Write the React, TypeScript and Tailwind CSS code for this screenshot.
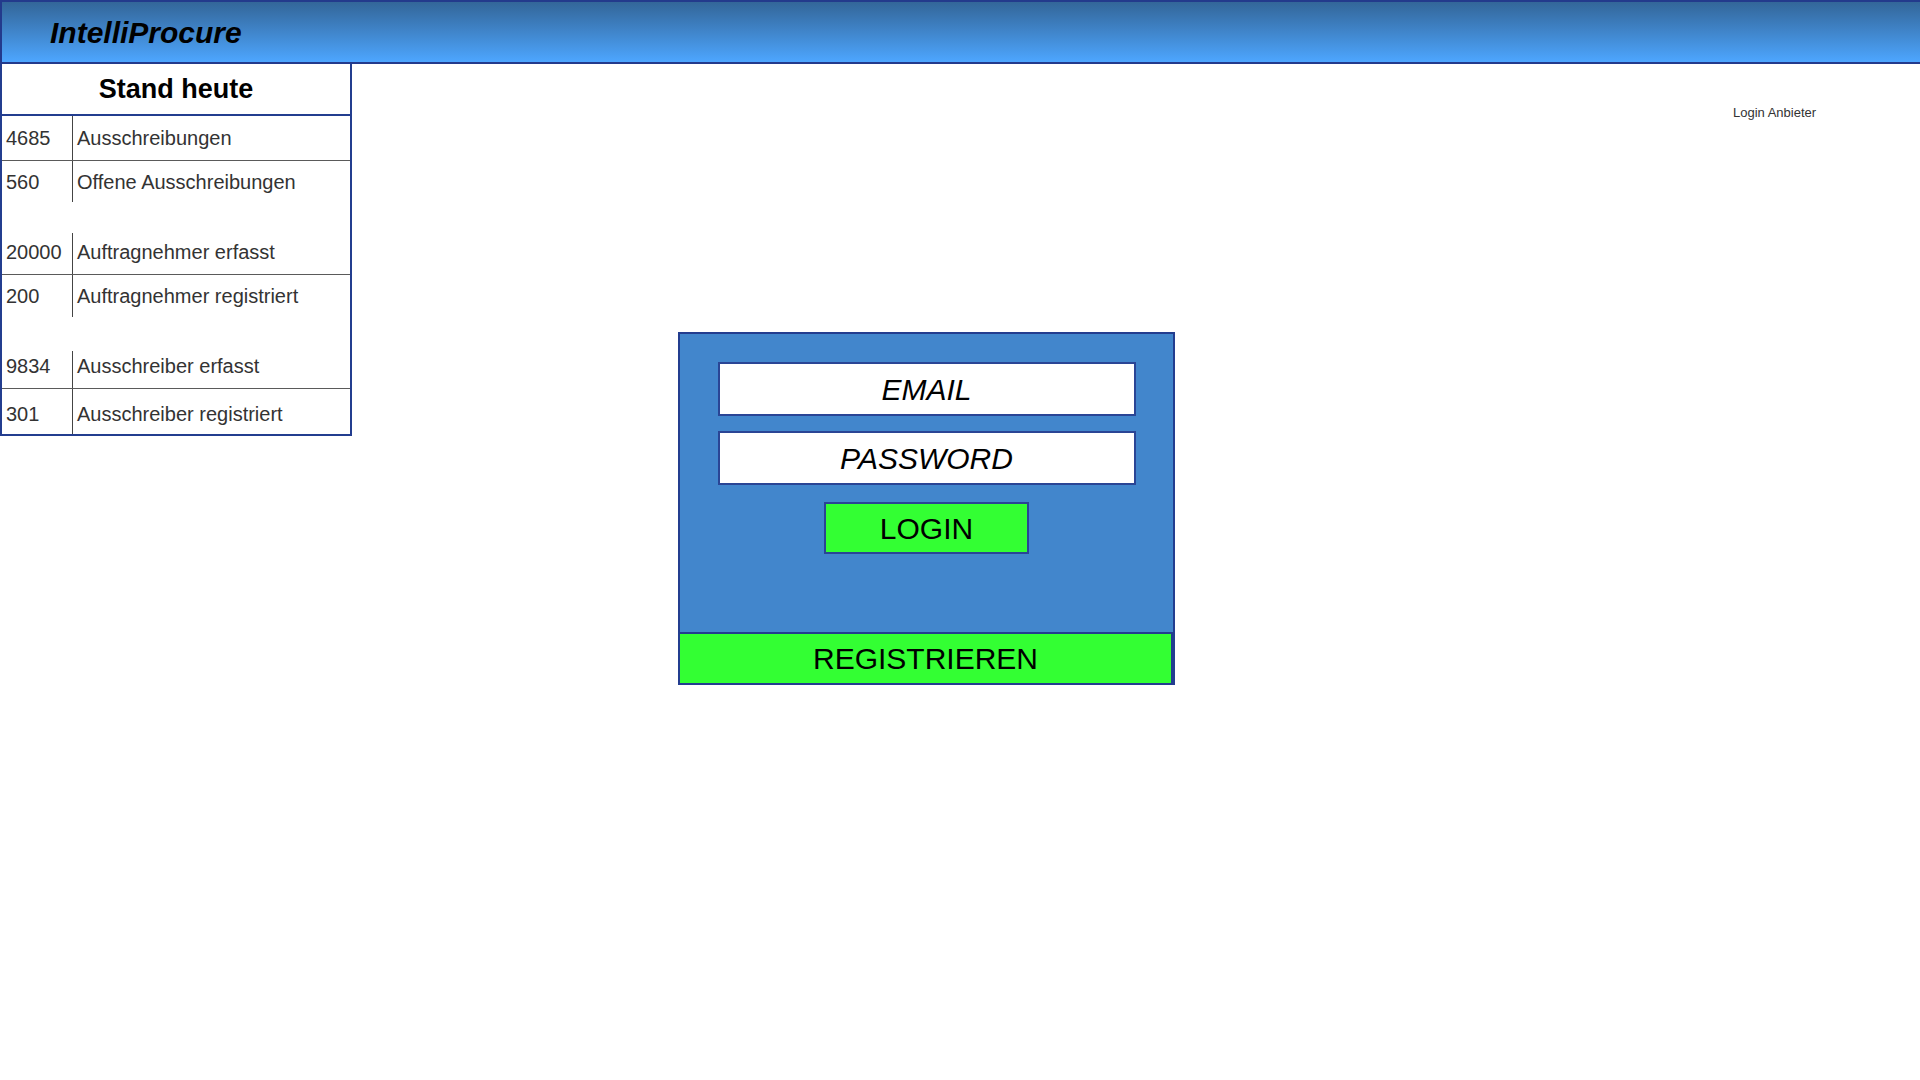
import React from 'react';

type Stat = { num: string; label: string; h: string; line?: boolean; shift?: string };

const groups: Stat[][] = [
  [
    { num: '4685', label: 'Ausschreibungen', h: 'h-[45px]', line: true },
    { num: '560', label: 'Offene Ausschreibungen', h: 'h-[41px]' },
  ],
  [
    { num: '20000', label: 'Auftragnehmer erfasst', h: 'h-[42px]', line: true, shift: 'pb-[4px]' },
    { num: '200', label: 'Auftragnehmer registriert', h: 'h-[42px]' },
  ],
  [
    { num: '9834', label: 'Ausschreiber erfasst', h: 'h-[38px]', line: true, shift: 'pb-[7px]' },
    { num: '301', label: 'Ausschreiber registriert', h: 'h-[45px]', shift: 'pt-[4px]' },
  ],
];

function StatRow({ num, label, h, line, shift }: Stat) {
  return (
    <div className={`flex ${h} ${line ? 'border-b border-[#5a5a5a]' : ''}`}>
      <div className={`w-[71px] border-r border-[#444] pl-[4px] flex items-center ${shift ?? ''}`}>{num}</div>
      <div className={`flex-1 pl-[4px] flex items-center ${shift ?? ''}`}>{label}</div>
    </div>
  );
}

export default function App() {
  return (
    <div className="min-h-screen bg-white font-['Liberation_Sans',Arial,sans-serif]">
      {/* Header */}
      <header className="h-[64px] border-y-2 border-l-2 border-[#233a8c] bg-gradient-to-b from-[#336699] to-[#4da6ff] flex items-center pl-[48px]">
        <h1 className="text-[30px] font-bold italic text-black">IntelliProcure</h1>
      </header>

      <div className="flex items-start">
        {/* Stand heute table */}
        <div className="w-[352px] border-x-2 border-b-2 border-[#233d8f] text-[20px] text-[#333]">
          <div className="h-[52px] border-b-2 border-[#233d8f] flex items-center justify-center text-[27px] font-bold text-black">
            Stand heute
          </div>
          <StatRow {...groups[0][0]} />
          <StatRow {...groups[0][1]} />
          <div className="h-[31px]" />
          <StatRow {...groups[1][0]} />
          <StatRow {...groups[1][1]} />
          <div className="h-[34px]" />
          <StatRow {...groups[2][0]} />
          <StatRow {...groups[2][1]} />
        </div>

        {/* Login box */}
        <div className="ml-[326px] mt-[268px] w-[497px] border-2 border-[#233d8f] bg-[#4286cc] flex flex-col items-center">
          <div className="mt-[28px] w-[418px] h-[54px] border-2 border-[#2a4595] bg-white flex items-center justify-center text-[30px] italic text-black">
            EMAIL
          </div>
          <div className="mt-[15px] w-[418px] h-[54px] border-2 border-[#2a4595] bg-white flex items-center justify-center text-[30px] italic text-black">
            PASSWORD
          </div>
          <button className="mt-[17px] w-[205px] h-[52px] border-2 border-[#2a4595] bg-[#33ff33] flex items-center justify-center text-[30px] text-black">
            LOGIN
          </button>
          <button className="mt-[78px] -mb-[2px] self-start -ml-[2px] w-[495px] h-[53px] border-2 border-[#233d8f] bg-[#33ff33] flex items-center justify-center text-[30px] text-black">
            REGISTRIEREN
          </button>
        </div>

        {/* Login Anbieter */}
        <div className="ml-[558px] mt-[39px] text-[13px] text-[#333]">Login Anbieter</div>
      </div>
    </div>
  );
}
